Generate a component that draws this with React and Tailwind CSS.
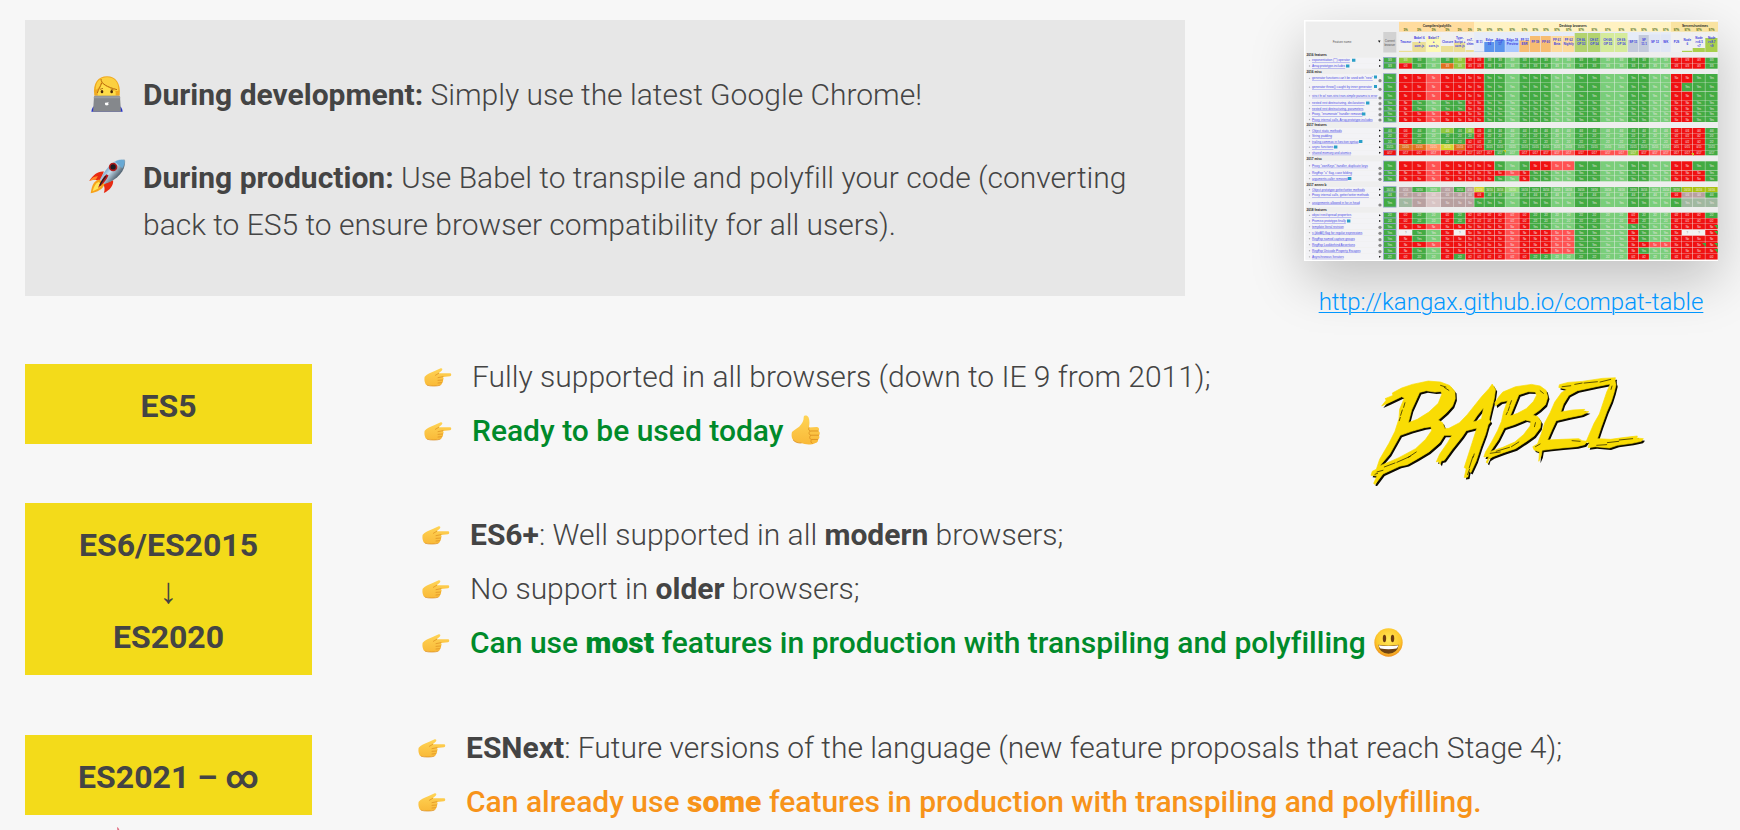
import React from "react";

const COLUMN_EDGES = [
  95, 108.3, 122.3, 137, 150, 161.7, 170.3, 180.3, 190.7, 201.3, 215.3, 226, 236.7, 247.3, 258.7, 270.7,
  283.7, 297, 310.7, 324, 334.7, 345.3, 356.7, 367, 378, 388.7, 401.3, 414,
];
const UNSTABLE = [2, 9, 13, 14, 17, 18, 21, 22];

const HEADS = [
  [["Traceur"], 0.06, "#ebdf94"],
  [["Babel 6", "+", "core-js"], 0.5, "#ebdf94"],
  [["Babel 7", "+", "core-js"], 0.75, "#fdfab5"],
  [["Closure"], 0.3, "#ebdf94"],
  [["Type-", "Script +", "core-js"], 0.48, "#ebdf94"],
  [["es7-", "shim"], 0.1, "#ebdf94"],
  [["IE 11"], 0.05, "#c9d8ef"],
  [["Edge", "16"], 0.5, "#5b94ec"],
  [["Edge", "17"], 0.6, "#5b94ec"],
  [["Edge 18", "Preview"], 0.6, "#a9c8ff"],
  [["FF 52", "ESR"], 0.58, "#f7bd72"],
  [["FF 59"], 0.8, "#f7bd72"],
  [["FF 60"], 0.8, "#f7bd72"],
  [["FF 61", "Beta"], 0.8, "#fddb9c"],
  [["FF 62", "Nightly"], 0.8, "#fddb9c"],
  [["CH 66,", "OP 53"], 0.95, "#b3d36f"],
  [["CH 67,", "OP 54"], 0.95, "#b3d36f"],
  [["CH 68,", "OP 55"], 0.95, "#d5eb9b"],
  [["CH 69,", "OP 56"], 0.95, "#d5eb9b"],
  [["SF 11"], 0.6, "#c3cadb"],
  [["SF", "11.1"], 0.85, "#c3cadb"],
  [["SF 12"], 0.88, "#e0e6f5"],
  [["WK"], 0.88, "#e0e6f5"],
  [["PJS"], 0, "#a9cf4c"],
  [["Node", "6"], 0.06, "#a9cf4c"],
  [["Node", ">=6.5", "<7"], 0.2, "#a9cf4c"],
  [["Node", ">=8.7", "<9"], 0.7, "#a9cf4c"],
];

// top, bottom, feature name, one colour key per engine, value
const ROWS = [
  [37.7, 43, "exponentiation (**) operator", "lggglrrggggggggggggggggrrrg", "3/3"],
  [43.3, 48.7, "Array.prototype.includes", "rggolrrggggggggggggggggrrrg", "3/3"],
  [54, 62.7, "generator functions can't be used with \"new\"", "rrrrrrrggggggggggggggggrrgg", "Yes"],
  [63, 71.3, "generator throw() caught by inner generator", "rrrrrrrggggggggggggggggrggg", "Yes"],
  [71.7, 80, "strict fn w/ non-strict non-simple params is error", "rrrrrrrggggggggggggggggrrgg", "Yes"],
  [80.3, 85.7, "nested rest destructuring, declarations", "rggggrrggggggggggggggggrrgg", "Yes"],
  [86, 91, "nested rest destructuring, parameters", "rggggrrggggggggggggggggrrgg", "Yes"],
  [91.3, 96.7, "Proxy, \"enumerate\" handler removed", "rrrrrrrggggggggggggggggrrgg", "Yes"],
  [97, 102, "Proxy internal calls, Array.prototype.includes", "rrrrrrrggggggggggggggggrrgg", "Yes"],
  [108, 113, "Object static methods", "rgglglrggggggggggggggggrrrg", "4/4"],
  [113.3, 118.7, "String padding", "rgggggrggggggggggggggggrrrg", "2/2"],
  [119, 124, "trailing commas in function syntax", "rggggrrggggggggggggggggrrrg", "2/2"],
  [124.3, 130, "async functions", "oomyorrggggggggggggggggrrrg", "15/15"],
  [130.3, 135.3, "shared memory and atomics", "rrrrrrrrggrrrrrrrrrlrrrrrrg", "0/17"],
  [141.3, 150.3, "Proxy \"ownKeys\" handler, duplicate keys", "rrrrrrrrgggrrrrggggggggrrgg", "Yes"],
  [150.7, 155.7, "RegExp \"u\" flag, case folding", "rrrrrrrrrrrggggggggggggrrrg", "Yes"],
  [156, 161.3, "arguments.caller removed", "rrrrrrrrggrggggggggggggrrrg", "Yes"],
  [167, 172, "Object.prototype getter/setter methods", "pggpgpykkkgggggggggggggkzzz", "16/16"],
  [172.3, 177.7, "Proxy internal calls, getter/setter methods", "pppppprggggggggggggggggrppg", "4/4"],
  [178.3, 187, "assignments allowed in for-in head", "epppppggggggggggggggggggeee", "Yes"],
  [192.7, 198, "object rest/spread properties", "rggrgrrrrrrggggggggrgggrrrg", "2/2"],
  [198.3, 203.7, "Promise.prototype.finally", "rggrgrrrrrrggggggggrgggrrrr", "2/2"],
  [204, 209.3, "template literal revision", "rrrrrrrrrrrggggggggggggrrrr", "Yes"],
  [210, 215.3, "s (dotAll) flag for regular expressions", "wggrwrrrrrrrrrrggggrgggrwwr", "Yes"],
  [215.7, 221.7, "RegExp named capture groups", "rggrrrrrrrrrrrrggggrgggrrrr", "Yes"],
  [222, 227.3, "RegExp Lookbehind Assertions", "rrrrrrrrrrrrrrrggggrrrrrrrr", "Yes"],
  [227.7, 233.7, "RegExp Unicode Property Escapes", "rggrrrrrrrrrrrrggggrgggrrrr", "Yes"],
  [234, 239.7, "Asynchronous Iterators", "rggrgrrrrrrggggggggrrggrrrr", "2/2"],
];

const SECTIONS = [
  [35, "2016 features"],
  [51.5, "2016 misc"],
  [105, "2017 features"],
  [138.6, "2017 misc"],
  [164.3, "2017 annex b"],
  [190, "2018 features"],
];

const SOLID = {
  g: "#43ab43", r: "#f01111", l: "#8fc83c", k: "#5cb33e", o: "#e0701c", m: "#ff9a60", y: "#d3d52c",
  p: "#b8a0a0", e: "#a0b8a0", w: "#f2f2f2", z: "#a9c210",
};
const LIGHT = { g: "#7ace7a", r: "#ff5252", k: "#96dc78", p: "#d8c4c4" };

function cellColor(key, column) {
  return (UNSTABLE.includes(column) && LIGHT[key]) || SOLID[key];
}

function cellText(key, value) {
  if (key === "w") return "?";
  if (key !== "r" && key !== "p") return value;
  return value === "Yes" ? "No" : value.replace(/^\d+/, "0");
}

function CompatTable() {
  return (
    <svg viewBox="0 0 414 241" className="block w-full bg-[#eeeeee] shadow-[0_20px_50px_0_rgba(0,0,0,0.22)]" role="img" aria-label="ECMAScript compatibility table" fontFamily="Liberation Sans, sans-serif">
      <rect width="414" height="241" fill="#eeeeee" />
      <rect x="95" y="1.7" width="75" height="10" fill="#ffdc9e" />
      <rect x="170" y="1.7" width="197" height="10" fill="#fff2c2" />
      <rect x="367" y="1.7" width="47" height="10" fill="#f9e3a0" />
      <g fontSize="3.2" fontWeight="700" textAnchor="middle" fill="#222">
        <text x="133" y="7.2">Compilers/polyfills</text>
        <text x="269" y="7.2">Desktop browsers</text>
        <text x="391" y="7.2">Servers/runtimes</text>
      </g>
      <rect x="79.3" y="12" width="13" height="20.5" fill="#d2d2d2" />
      <g fontSize="3" textAnchor="middle" fill="#555">
        <text x="38" y="23">Feature name</text>
        <text x="85.8" y="21.5">Current</text>
        <text x="85.8" y="25.5">browser</text>
      </g>
      <path d="M74 20.5h2.5l-1.2 2.2z" fill="#111" />
      {HEADS.map(([lines, share, fill], i) => {
        const x = COLUMN_EDGES[i];
        const w = COLUMN_EDGES[i + 1] - x;
        return (
          <g key={i} textAnchor="middle">
            <text x={x + w / 2} y="11" fontSize="2.8" fontWeight="700" fill="#4a6a10">{i < 7 ? "5%" : "97%"}</text>
            <rect x={x} y="12" width={w - 0.5} height="20" fill={i < 23 && i > 5 ? "#e6ecf8" : "#f0f0f0"} />
            <rect x={x} y={32 - 20 * share} width={w - 0.5} height={20 * share} fill={fill} />
            {lines.map((line, j) => (
              <text key={j} x={x + w / 2} y={23.2 + (j - (lines.length - 1) / 2) * 4.2} fontSize="3" fontWeight="700" fill="#3c3ce0">{line}</text>
            ))}
          </g>
        );
      })}
      {SECTIONS.map(([y, name]) => (
        <text key={name} x="2.5" y={y + 1.2} fontSize="3.2" fontWeight="700" fill="#222">{name}</text>
      ))}
      {ROWS.map(([top, bottom, name, keys, value], i) => {
        const mid = (top + bottom) / 2;
        return (
          <g key={i}>
            <rect x="2" y={top} width="75" height={bottom - top} fill="#f3f3f6" />
            <text x="8" y={mid + 1} fontSize="3.1" fill="#4a4ae6" textDecoration="underline">{name}</text>
            <circle cx="5.5" cy={mid} r="0.7" fill="#aaa" />
            {value === "Yes" ? <circle cx="76" cy={bottom - 2} r="1.6" fill="#888" /> : <path d={`M75 ${mid - 1}l2 1l-2 1z`} fill="#111" />}
            <rect x="79.5" y={top - 0.3} width="12.6" height={bottom - top + 0.4} fill={i === 13 ? SOLID.r : SOLID.g} stroke="#9aa6d8" strokeWidth="0.7" />
            <text x="85.8" y={mid + 1} fontSize="2.7" textAnchor="middle" fill="#e8f4e8">{value}</text>
            {keys.split("").map((key, c) => {
              const x = COLUMN_EDGES[c];
              const w = COLUMN_EDGES[c + 1] - x;
              return (
                <g key={c}>
                  <rect x={x} y={top} width={w - 0.4} height={bottom - top} fill={cellColor(key, c)} />
                  <text x={x + w / 2} y={mid + 1} fontSize="2.7" textAnchor="middle" fill={key === "w" ? "#777" : "#f3e8e8"}>{cellText(key, value)}</text>
                </g>
              );
            })}
          </g>
        );
      })}
      <path d="M48 38.8h3.4v3h-3.4zM42 44.5h3.4v3h-3.4zM70 55.5h3v3h-3zM70 65h3v3h-3zM62 81.5h3.4v3h-3.4zM58 92.5h3.4v3h-3.4zM55 120h3.4v3h-3.4zM30 125.5h3.4v3h-3.4zM44 157h3.4v3h-3.4zM43 199.5h3.4v3h-3.4z" fill="#2a9fc8" />
      <path d="M387 133l3 0v3zM199 130h3v3z" fill="#c4c820" />
      <path d="M410 205h4v4zM410 211h4v4zM410 223h4v4zM398 223h4v4zM410 229h4v4z" fill="#43ab43" />
      <path d="M0 0h414v1.5H1.5V239.8H414V241H0z" fill="#ffffff" />
    </svg>
  );
}

const BABEL_PATHS = [
  "M98 140L112 122L108 118L132 108L130 101L158 86L190 75L238 65L275 68L302 78L318 96L319 118L311 140L293 160L268 182L281 190L288 208L300 207L332 190L355 166L398 112L420 88L430 74L440 90L436 118L428 150L421 180L425 187L418 196L410 225L396 262L382 305L366 340L360 336L357 353L346 355L352 328L346 325L362 275L384 206L352 214L340 232L310 270L286 303L277 305L274 315L268 306L262 308L272 285L296 250L309 228L286 228L272 250L240 278L205 299L175 316L152 321L102 344L84 368L78 376L74 372L84 350L66 348L70 336L82 330L92 300L120 252L138 216L150 178L152 150L166 116L158 112L120 130Z M212 99L232 94L258 98L276 96L279 104L268 132L240 158L205 180L178 190L188 152Z M154 228L188 216L226 205L246 202L248 214L230 240L200 268L150 295L92 320L122 285Z M404 145L384 170L372 188L386 184L398 178Z",
  "M438 130L450 112L462 98L500 82L548 75L574 80L592 93L597 114L590 136L572 153L552 167L567 172L577 188L574 206L556 230L532 247L500 268L464 280L432 292L420 300L416 312L412 309L420 292L405 293L410 278L428 248L446 214L458 186L464 158L476 124L456 128L440 140Z M510 106L538 97L560 98L563 108L554 126L532 148L506 162L484 170Z M466 206L496 196L530 182L546 186L544 200L524 226L498 248L462 264L424 277L448 242Z",
  "M632 76L658 69L700 66L760 57L800 55L798 66L788 73L742 82L686 94L660 108L644 134L636 158L672 152L708 150L704 155L720 157L700 167L660 175L622 184L610 210L596 242L640 240L690 238L700 244L716 246L708 256L684 262L640 266L604 270L580 273L577 290L570 306L572 278L556 272L552 262L566 254L578 222L588 190L604 160L618 128L638 100L654 90L630 84Z",
  "M774 98L784 76L780 66L798 62L802 76L796 100L788 126L774 158L758 202L746 238L786 240L830 234L866 230L864 236L884 238L878 246L850 252L806 258L782 266L740 262L718 265L722 250L712 247L736 192L752 164L764 128Z",
];

function BabelLogo() {
  return (
    <svg viewBox="60 50 832 330" className="block h-[110px] w-[277px]" role="img" aria-label="Babel">
      <g fillRule="evenodd">
        <g fill="#0d0b00" transform="translate(5 6)">
          {BABEL_PATHS.map((d) => <path key={d} d={d} />)}
        </g>
        <g fill="#f9dc04" stroke="#f9dc04" strokeWidth="2" strokeLinejoin="round">
          {BABEL_PATHS.map((d) => <path key={d} d={d} />)}
        </g>
      </g>
      <g fill="none" stroke="#0d0b00" strokeWidth="2" strokeLinecap="round">
        <path d="M168 130l-4 14M160 152l-5 16M154 174l-3 10M275 78l16 5M286 84l14 9M106 323l32-12M144 309l40-18M84 338l18-5M78 345l8-3M178 294l24-16M372 292l-11 34M376 284l-3 10M362 330l-6 16" />
        <path d="M488 124l-5 13M482 142l-4 12M476 158l-4 8M574 94l10 8M442 276l40-12M488 262l22-14M424 282l30-4M560 190l-3 12M678 75l22-4M706 71l40-4M754 68l32-8M640 82l26-3M670 244l24 2M560 262l14-8M776 250l34-4M812 242l40-4M744 258l30-2M790 80l-3 10" />
      </g>
    </svg>
  );
}

function PointingHand() {
  return (
    <svg viewBox="0 0 84 57" className="block h-[19px] w-[28px] shrink-0" role="img" aria-label="pointing right">
      <defs>
        <linearGradient id="skin" x1="0" y1="0" x2="0" y2="1">
          <stop offset="0" stopColor="#ffd455" />
          <stop offset="1" stopColor="#f9b938" />
        </linearGradient>
      </defs>
      <path d="M2 26C8 18 20 14 32 9L50 1C55 0 57 4 53 8L44 16L78 16C83 16 83 24 78 25L57 27C60 31 59 34 57 36C58 40 57 43 54 44C54 48 52 51 48 52C40 55 20 55 10 52C2 50 0 34 2 26Z" fill="url(#skin)" />
      <path d="M44 16L34 22M57 26L42 29M56 36L42 37M54 44L42 45M48 52C38 55 20 55 10 52" fill="none" stroke="#d98a1c" strokeWidth="2" strokeLinecap="round" />
    </svg>
  );
}

function ThumbsUp() {
  return (
    <svg viewBox="0 0 90 92" className="ml-2 inline-block h-[30px] w-[30px] align-[-4px]" role="img" aria-label="thumbs up">
      <path d="M2 52C10 46 16 42 24 36C34 24 38 18 38 6C39 0 50 0 53 8C58 22 54 34 54 38L78 37C85 37 87 45 83 49C89 52 88 60 84 63C88 67 86 73 81 75C84 80 80 85 74 86C60 93 42 91 30 86C18 86 10 83 6 77C0 70 0 60 2 52Z" fill="url(#skin)" />
      <path d="M54 39C52 43 53 47 58 49L82 49M57 50C52 54 54 61 60 62L84 62M59 63C54 68 56 74 62 75L81 75M62 76C58 80 60 85 64 87M6 77C12 84 20 86 30 86" fill="none" stroke="#d98a1c" strokeWidth="2.4" strokeLinecap="round" />
    </svg>
  );
}

function Smiley() {
  return (
    <svg viewBox="0 0 86 86" className="ml-2 inline-block h-[29px] w-[29px] align-[-4px]" role="img" aria-label="smiling face">
      <defs>
        <radialGradient id="face" cx="0.5" cy="0.4" r="0.6">
          <stop offset="0" stopColor="#ffe95a" />
          <stop offset="0.7" stopColor="#fdc92e" />
          <stop offset="1" stopColor="#ee8f1c" />
        </radialGradient>
      </defs>
      <circle cx="43" cy="43" r="42" fill="url(#face)" />
      <ellipse cx="31" cy="31" rx="5" ry="11" fill="#6b3a10" />
      <ellipse cx="55" cy="31" rx="5" ry="11" fill="#6b3a10" />
      <path d="M13 50Q43 55 73 50Q70 76 43 76Q16 76 13 50Z" fill="#6e4212" />
      <path d="M14 51Q43 56 72 51Q71 58 67 61Q43 65 19 61Q15 58 14 51Z" fill="#fff" />
    </svg>
  );
}

function Technologist() {
  return (
    <svg viewBox="0 0 96 106" className="mt-[5px] block h-[36px] w-[32px] shrink-0" role="img" aria-label="woman technologist">
      <path d="M10 58C4 20 22 0 48 0C74 0 90 20 86 58Z" fill="#f0aa20" />
      <path d="M14 40C14 14 30 3 48 3C68 3 84 16 82 44L74 44C60 34 44 30 30 16C28 30 20 38 14 40Z" fill="#fcd040" />
      <path d="M20 58C20 40 26 34 32 20C44 34 66 36 74 46L74 58Z" fill="#ffdc48" />
      <path d="M30 8C30 22 48 32 78 40M32 20C28 32 22 40 19 50" fill="none" stroke="#b86c10" strokeWidth="3" />
      <path d="M27 39l9-3M59 38l9 3" stroke="#a86412" strokeWidth="2.5" />
      <ellipse cx="33" cy="46" rx="4" ry="5" fill="#4a2a0a" />
      <ellipse cx="62" cy="46" rx="4" ry="5" fill="#4a2a0a" />
      <path d="M1 106C2 96 6 90 14 86H80C90 90 94 96 95 106Z" fill="#2a34c8" />
      <path d="M13 58H83Q87 58 87 62L90 106H6L9 62Q9 58 13 58Z" fill="#85888c" />
      <path d="M9 60H87L88 66H8Z" fill="#9a9da1" />
      <path d="M47 79C43 77 41 81 42 84C44 89 46 87 48 87C50 87 51 88 53 84C51 82 51 81 53 79C51 77 49 79 47 79Z" fill="#fff" />
    </svg>
  );
}

function Rocket() {
  return (
    <svg viewBox="0 0 110 106" className="mt-[5px] block h-[35px] w-[37px] shrink-0" role="img" aria-label="rocket">
      <defs>
        <linearGradient id="hull" x1="0.2" y1="0.2" x2="0.8" y2="0.7">
          <stop offset="0" stopColor="#3f7fb4" />
          <stop offset="0.45" stopColor="#c4dcec" />
          <stop offset="1" stopColor="#3a4a58" />
        </linearGradient>
      </defs>
      <path d="M44 38C26 36 12 48 0 66C12 62 20 62 32 68Z" fill="#e82a12" />
      <path d="M72 64C74 80 62 94 44 103C48 92 46 84 42 76Z" fill="#e82a12" />
      <path d="M0 66C8 56 16 52 26 52L20 62Z" fill="#ff8a28" />
      <path d="M30 62C14 66 8 78 4 104C24 100 42 92 46 76Z" fill="#f7a21a" />
      <path d="M28 70C18 74 14 84 10 98C24 92 34 86 38 76Z" fill="#ffe65a" />
      <path d="M108 2C84 -4 58 14 32 62L46 76C90 62 112 30 108 2Z" fill="url(#hull)" />
      <path d="M106 4C94 0 84 4 78 9L100 28C106 18 108 10 106 4Z" fill="#69a9d4" />
      <circle cx="72" cy="24" r="13" fill="#b01a1a" />
      <circle cx="72" cy="24" r="8" fill="#1c1c24" />
      <path d="M52 46C42 54 34 68 26 88C40 78 52 64 58 50Z" fill="#b8181a" />
      <path d="M50 52C42 62 36 70 32 80" stroke="#222" strokeWidth="4" fill="none" />
    </svg>
  );
}

function Point({ className = "font-light text-[#444]", children }) {
  return (
    <li className={`flex items-center gap-5 ${className}`}>
      <PointingHand />
      <span className="whitespace-nowrap">{children}</span>
    </li>
  );
}

function Version({ children }) {
  return (
    <h2 className="w-[287px] shrink-0 bg-[#f3db1a] pt-[19px] pb-[15px] text-center text-[32px] leading-[46px] font-bold text-[#444]">
      {children}
    </h2>
  );
}

export default function App() {
  return (
    <main className="flex min-h-screen flex-col overflow-hidden bg-[#f7f7f7] pt-5 pr-[22px] pl-[25px] font-['Roboto',sans-serif] text-[30px] text-[#444] [font-variant-ligatures:none]">
      <header className="flex items-start gap-[119px]">
        <ul className="flex flex-1 flex-col gap-[36px] bg-[#e7e7e7] pt-[51px] pr-[44px] pb-[48px] pl-[64px] leading-[47px] font-light">
          <li className="flex">
            <span className="w-[54px] shrink-0 pl-[2px]"><Technologist /></span>
            <p><strong className="font-bold">During development:</strong> Simply use the latest Google Chrome!</p>
          </li>
          <li className="flex">
            <span className="w-[54px] shrink-0"><Rocket /></span>
            <p>
              <strong className="font-bold">During production:</strong> Use Babel to transpile and polyfill your code (converting back to ES5 to ensure browser compatibility for all users).
            </p>
          </li>
        </ul>
        <figure className="w-[414px] shrink-0">
          <CompatTable />
          <figcaption className="relative mt-[25px] text-center text-[24px] leading-8 font-light">
            <a href="http://kangax.github.io/compat-table" className="text-[#0096ff] underline decoration-1 underline-offset-2">http://kangax.github.io/compat-table</a>
          </figcaption>
        </figure>
      </header>

      <div className="leading-[54px]">
        <section className="mt-[4px] flex items-center gap-[112px]">
          <Version>ES5</Version>
          <ul>
            <Point>Fully supported in all browsers (down to IE 9 from 2011);</Point>
            <Point className="font-medium text-[#008a2a]">Ready to be used today<ThumbsUp /></Point>
          </ul>
          <div className="ml-auto flex w-[414px] shrink-0 justify-center pt-[54px] pr-[44px]"><BabelLogo /></div>
        </section>

        <section className="mt-[17px] flex items-center gap-[110px]">
          <Version>
            ES6/ES2015
            <span className="block font-['Liberation_Sans',sans-serif] text-[36px] leading-[46px]">↓</span>
            ES2020
          </Version>
          <ul>
            <Point><strong className="font-bold">ES6+</strong>: Well supported in all <strong className="font-bold">modern</strong> browsers;</Point>
            <Point>No support in <strong className="font-bold">older</strong> browsers;</Point>
            <Point className="font-medium text-[#008a2a]">Can use <strong className="font-black">most</strong> features in production with transpiling and polyfilling<Smiley /></Point>
          </ul>
        </section>

        <section className="relative mt-[46px] flex items-center gap-[106px]">
          <Version>ES2021 – ∞</Version>
          <ul>
            <Point><strong className="font-bold">ESNext</strong>: Future versions of the language (new feature proposals that reach Stage 4);</Point>
            <Point className="font-medium text-[#f7931a]">Can already use <strong className="font-black">some</strong> features in production with transpiling and polyfilling.</Point>
          </ul>
          <svg viewBox="0 0 4 3" className="absolute top-[106px] left-[91px] h-[3px] w-[4px]" aria-hidden="true">
            <path d="M1 0L2.4 1L3.4 3H1.4Z" fill="#e06a80" />
          </svg>
        </section>
      </div>
    </main>
  );
}
